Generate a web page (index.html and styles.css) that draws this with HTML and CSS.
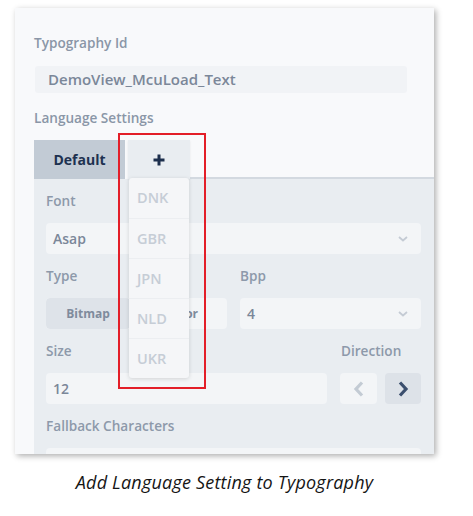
FILE: index.html
```html
<!DOCTYPE html>
<html>
<head>
<meta charset="utf-8">
<link rel="stylesheet" href="styles.css">
</head>
<body>
<div class="figure">
  <div class="card">
    <div class="label top-label">Typography Id</div>
    <div class="id-input">DemoView_McuLoad_Text</div>
    <div class="label lang-label">Language Settings</div>
    <div class="tabs">
      <div class="tab tab-default">Default</div>
      <div class="tab tab-add">
        <svg width="12" height="12" viewBox="0 0 12 12"><path d="M6 0.5v11M0.5 6h11" stroke="#1d2f4d" stroke-width="3"/></svg>
      </div>
      <div class="tab-fill"></div>
    </div>
    <div class="panel">
      <div class="plabel">Font</div>
      <div class="box select">
        <span>Asap</span>
        <svg class="chev" width="12" height="8" viewBox="0 0 12 8"><path d="M2 2l4 3.5L10 2" fill="none" stroke="#c4cbd4" stroke-width="1.8"/></svg>
      </div>
      <div class="two-col">
        <div class="col">
          <div class="plabel">Type</div>
          <div class="box seg">
            <div class="seg-btn active">Bitmap</div>
            <div class="seg-btn">Vector</div>
          </div>
        </div>
        <div class="col">
          <div class="plabel">Bpp</div>
          <div class="box select">
            <span>4</span>
            <svg class="chev" width="12" height="8" viewBox="0 0 12 8"><path d="M2 2l4 3.5L10 2" fill="none" stroke="#c4cbd4" stroke-width="1.8"/></svg>
          </div>
        </div>
      </div>
      <div class="size-row">
        <div class="col">
          <div class="plabel">Size</div>
          <div class="box"><span>12</span></div>
        </div>
        <div class="col">
          <div class="plabel dir-label">Direction</div>
          <div class="dir-btns">
            <div class="dir-btn">
              <svg width="14" height="18" viewBox="0 0 14 18"><path d="M10 2.5L4 9l6 6.5" fill="none" stroke="#c3cbd4" stroke-width="3.2"/></svg>
            </div>
            <div class="dir-btn on">
              <svg width="14" height="18" viewBox="0 0 14 18"><path d="M4 2.5L10 9l-6 6.5" fill="none" stroke="#3b4f6e" stroke-width="3.2"/></svg>
            </div>
          </div>
        </div>
      </div>
      <div class="plabel">Fallback Characters</div>
      <div class="box"></div>
    </div>
    <div class="dropdown">
      <div class="dd-item">DNK</div>
      <div class="dd-item">GBR</div>
      <div class="dd-item">JPN</div>
      <div class="dd-item">NLD</div>
      <div class="dd-item">UKR</div>
    </div>
    <div class="highlight"></div>
  </div>
  <div class="caption">Add Language Setting to Typography</div>
</div>
</body>
</html>
```
FILE: styles.css
```css
html, body {
  margin: 0;
  padding: 0;
  background: #ffffff;
}
body {
  font-family: "Open Sans", "Noto Sans", sans-serif;
}
.figure {
  padding-top: 8px;
  padding-left: 15px;
}
.card {
  position: relative;
  width: 419px;
  height: 446px;
  overflow: hidden;
  background: #f8f9fb;
  box-shadow: 2px 2px 6px rgba(0, 0, 0, 0.32);
  padding-left: 19px;
  box-sizing: border-box;
}
.label {
  font-size: 13.6px;
  font-weight: 600;
  color: #8a96a7;
  line-height: 20px;
}
.top-label {
  padding-top: 25px;
}
.id-input {
  margin-top: 13px;
  margin-left: 1px;
  width: 372px;
  height: 27px;
  background: #f1f3f6;
  border-radius: 3px;
  font-size: 15px;
  font-weight: 600;
  color: #7b8799;
  line-height: 27px;
  padding-left: 13px;
  box-sizing: border-box;
}
.lang-label {
  margin-top: 15px;
}
.tabs {
  display: flex;
  margin-top: 12px;
  height: 39px;
}
.tab {
  height: 39px;
  display: flex;
  align-items: center;
  justify-content: center;
}
.tab-default {
  width: 91px;
  background: #c2cbd5;
  font-size: 14px;
  font-weight: 700;
  color: #1d3150;
}
.tab-add {
  width: 62px;
  margin-left: 3px;
  background: #e9edf1;
  box-shadow: 0 1px 2px rgba(0, 0, 0, 0.08);
}
.tab-fill {
  flex: 1;
  height: 37px;
  border-bottom: 2px solid #d3d9e0;
}
.panel {
  background: #e9edf1;
  padding: 12px 13px 0 12px;
  height: 300px;
}
.plabel {
  font-size: 13.6px;
  font-weight: 600;
  color: #8d99aa;
  line-height: 20px;
  height: 20px;
}
.box {
  margin-top: 12px;
  margin-bottom: 12px;
  height: 31px;
  background: #f3f5f7;
  border-radius: 4px;
  display: flex;
  align-items: center;
  padding-left: 7px;
  box-sizing: border-box;
  font-size: 14px;
  font-weight: 600;
  color: #7b8799;
}
.select {
  justify-content: space-between;
  padding-right: 12px;
}
.chev {
  display: block;
}
.two-col {
  display: grid;
  grid-template-columns: 181px 181px;
  column-gap: 13px;
}
.seg {
  padding: 0;
  display: grid;
  grid-template-columns: 84px 1fr;
  overflow: hidden;
}
.seg-btn {
  height: 31px;
  display: flex;
  align-items: center;
  justify-content: center;
  font-size: 12px;
  font-weight: 700;
  color: #7f8b9c;
}
.seg-btn.active {
  background: #dee3e9;
  border-radius: 4px;
}
.size-row {
  display: grid;
  grid-template-columns: 281px 81px;
  column-gap: 13px;
}
.dir-label {
  padding-left: 1px;
}
.dir-btns {
  margin-top: 12px;
  display: grid;
  grid-template-columns: 37px 36px;
  column-gap: 8px;
}
.dir-btn {
  height: 31px;
  background: #f3f5f7;
  border-radius: 4px;
  display: flex;
  align-items: center;
  justify-content: center;
}
.dir-btn.on {
  background: #dde2e8;
}
.dropdown {
  position: absolute;
  left: 114px;
  top: 170px;
  width: 60px;
  background: #f5f6f8;
  border-radius: 3px;
  box-shadow: 0 1px 4px rgba(0, 0, 0, 0.14);
}
.dd-item {
  height: 40px;
  line-height: 40px;
  padding-left: 8px;
  font-size: 14.5px;
  font-weight: 600;
  color: #c6cdd6;
  border-top: 1px solid #eceef1;
  box-sizing: border-box;
}
.dd-item:first-child {
  border-top: none;
}
.highlight {
  position: absolute;
  left: 103px;
  top: 125px;
  width: 88px;
  height: 256px;
  border: 2px solid #e31e28;
  box-sizing: border-box;
}
.caption {
  width: 419px;
  margin-top: 16px;
  text-align: center;
  font-family: "Open Sans", sans-serif;
  font-style: italic;
  font-size: 18px;
  letter-spacing: 0.2px;
  color: #151515;
  line-height: 24px;
}
```
